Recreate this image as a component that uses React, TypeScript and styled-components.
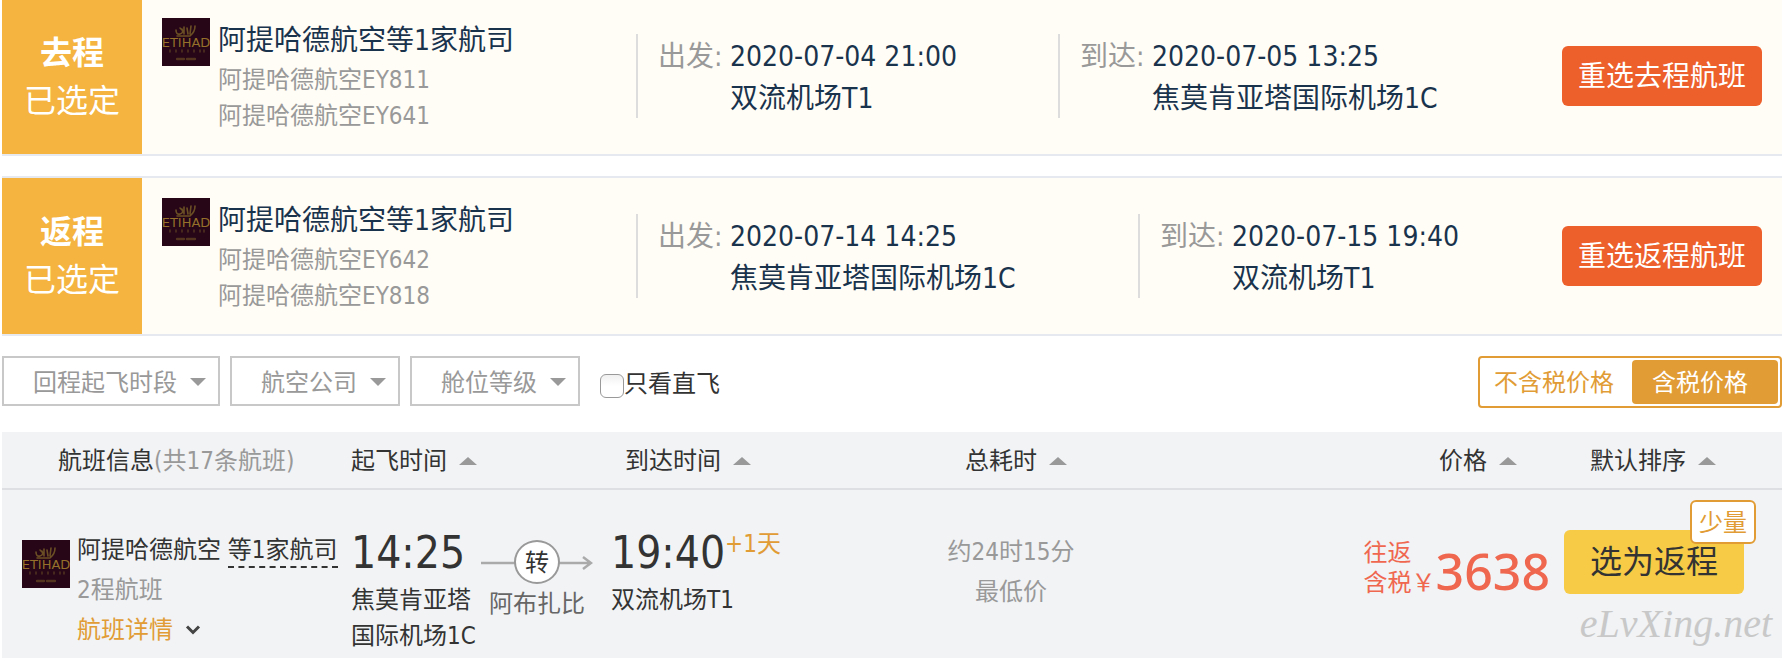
import React from 'react';
import styled, { createGlobalStyle } from 'styled-components';

const GlobalStyle = createGlobalStyle`
  *, *::before, *::after { box-sizing: border-box; }
  body {
    margin: 0;
    background: #fff;
    color: #333;
    font-family: Tahoma, 'DejaVu Sans Condensed', 'Noto Sans CJK SC', sans-serif;
    font-size: 24px;
    line-height: 36px;
  }
  button, select, input { font: inherit; margin: 0; }
  button { cursor: pointer; }
`;

const Page = styled.main`
  position: relative;
  padding: 0 2px;
`;

/* ---------- selected legs ---------- */

const Leg = styled.section<{ $first?: boolean }>`
  display: flex;
  align-items: stretch;
  height: ${(p) => (p.$first ? 156 : 160)}px;
  margin-bottom: 20px;
  border: solid #e6e9f0;
  border-width: ${(p) => (p.$first ? '0 0 2px' : '2px 0')};
  background: #fffdf6;
  color: #1a334d;
  font-size: 28px;
`;

const LegTag = styled.div`
  flex: none;
  display: flex;
  flex-direction: column;
  justify-content: center;
  width: 140px;
  background: #f4b43f;
  color: #fff;
  font-size: 32px;
  line-height: 48px;
  text-align: center;
`;

const Carrier = styled.div<{ $first?: boolean }>`
  flex: none;
  display: flex;
  gap: 8px;
  width: 494px;
  padding: ${(p) => (p.$first ? 18 : 20)}px 0 0 20px;
`;

const CarrierName = styled.h2`
  margin: 0;
  padding-top: 2px;
  font-size: 28px;
  font-weight: 400;
  line-height: 42px;
`;

const CarrierFlight = styled.p`
  margin: 0;
  color: #999;
  font-size: 24px;
  line-height: 36px;
`;

const Stop = styled.dl<{ $first?: boolean; $width?: number }>`
  display: grid;
  grid-template-columns: 72px auto;
  grid-template-rows: 42px 42px;
  justify-content: start;
  flex: ${(p) => (p.$width ? `0 1 ${p.$width}px` : '1 1 auto')};
  height: 84px;
  margin: ${(p) => (p.$first ? 34 : 36)}px 0 0;
  padding: 2px 0 0 20px;
  border-left: 2px solid #ddd;
  line-height: 42px;
  white-space: nowrap;
`;

const StopLabel = styled.dt`
  color: #999;
`;

const StopText = styled.dd`
  grid-column: 2;
  margin: 0;
`;

const ReselectButton = styled.button<{ $first?: boolean }>`
  flex: none;
  width: 200px;
  height: 60px;
  margin: ${(p) => (p.$first ? 46 : 48)}px 20px 0 0;
  padding: 2px 0 0;
  border: 0;
  border-radius: 6px;
  background: #ed5f2b;
  color: #fff;
`;

/* ---------- filters ---------- */

const FilterBar = styled.form`
  display: flex;
  align-items: flex-start;
  gap: 10px;
  height: 76px;
`;

const SelectBox = styled.div<{ $width: number }>`
  position: relative;
  width: ${(p) => p.$width}px;

  &::after {
    content: '';
    position: absolute;
    top: 22px;
    right: 14px;
    border: solid transparent;
    border-width: 8px 8px 0;
    border-top-color: #999;
    pointer-events: none;
  }
`;

const Select = styled.select`
  display: block;
  width: 100%;
  height: 50px;
  padding: 4px 0 0 29px;
  appearance: none;
  border: 2px solid #c8c8c8;
  border-radius: 0;
  background: #fff;
  color: #999;
`;

const DirectOnly = styled.label`
  display: flex;
  align-items: center;
  height: 56px;
  margin-left: 10px;
`;

const Checkbox = styled.input`
  width: 24px;
  height: 24px;
  margin-top: 4px;
  appearance: none;
  border: 1px solid #999;
  border-radius: 6px;
  background: linear-gradient(#f0f0f0, #fff 50%);
  &:checked { background: #e19c35; }
`;

const TaxToggle = styled.div`
  display: flex;
  height: 52px;
  margin-left: auto;
  padding: 2px;
  border: 2px solid #e19c35;
  border-radius: 4px;
`;

const TaxOption = styled.button<{ $active?: boolean }>`
  height: 44px;
  padding: ${(p) => (p.$active ? '2px 30px 0 20px' : '2px 18px 0 12px')};
  border: 0;
  border-radius: 4px;
  background: ${(p) => (p.$active ? '#e19c35' : 'transparent')};
  color: ${(p) => (p.$active ? '#fff' : '#e19c35')};
`;

/* ---------- result table ---------- */

const Results = styled.table`
  width: 100%;
  table-layout: fixed;
  border-collapse: separate;
  border-spacing: 0;
  background: #f1f3f5;
`;

const Col = styled.col<{ $width?: number }>`
  width: ${(p) => (p.$width ? `${p.$width}px` : 'auto')};
`;

const Head = styled.th<{ $indent?: number; $end?: number; $align?: string }>`
  height: 58px;
  padding: 2px ${(p) => p.$end ?? 0}px 0 ${(p) => p.$indent ?? 0}px;
  border-bottom: 2px solid #dddfe2;
  font-weight: 400;
  text-align: ${(p) => p.$align ?? 'left'};
  white-space: nowrap;
`;

const SortButton = styled.button`
  display: inline-flex;
  align-items: center;
  gap: 12px;
  padding: 0;
  border: 0;
  background: none;
  color: inherit;

  &::after {
    content: '';
    border: solid transparent;
    border-width: 0 9px 8px;
    border-bottom-color: #999;
  }
`;

const Muted = styled.span`
  color: #999;
`;

const Cell = styled.td<{ $top: number; $end?: number; $align?: string }>`
  height: 168px;
  padding: ${(p) => p.$top}px ${(p) => p.$end ?? 0}px 0 0;
  text-align: ${(p) => p.$align ?? 'left'};
  vertical-align: top;
  white-space: nowrap;
`;

const FlightInfo = styled.div`
  display: flex;
  gap: 7px;
  padding-left: 20px;
  line-height: 40px;
`;

const LogoSlot = styled.div`
  padding-top: 10px;
  line-height: 0;
`;

const CodeShare = styled.span`
  display: inline-block;
  height: 38px;
  border-bottom: 2px dashed #333;
`;

const DetailLink = styled.a`
  display: flex;
  align-items: center;
  gap: 12px;
  color: #e19c35;
  text-decoration: none;
`;

const Time = styled.div`
  display: flex;
  align-items: flex-start;
  height: 56px;
  font-size: 44px;
  line-height: 54px;
`;

const DayShift = styled.sup`
  color: #e19c35;
  font-size: 24px;
  line-height: 36px;
`;

const Transfer = styled.div`
  width: 112px;
  margin-left: 2px;
  color: #666;
  line-height: 36px;
  text-align: center;
`;

const TransferLine = styled.div`
  position: relative;
  display: flex;
  justify-content: center;
  height: 46px;

  svg {
    position: absolute;
    top: 16px;
    left: 0;
  }
`;

const TransferMark = styled.span`
  position: relative;
  width: 46px;
  height: 44px;
  border: 2px solid #999;
  border-radius: 50%;
  background: #fff;
  color: #333;
  line-height: 42px;
`;

const Duration = styled.div`
  color: #999;
  line-height: 40px;
`;

const Price = styled.div`
  display: flex;
  align-items: flex-end;
  justify-content: flex-end;
  color: #f0674f;
  line-height: 30px;
  text-align: left;
`;

const Amount = styled.strong`
  font-family: 'Noto Sans', 'Open Sans', sans-serif;
  font-size: 50px;
  font-weight: 500;
  line-height: 54px;
`;

const Action = styled.div`
  position: relative;
  width: 192px;
  margin-left: 12px;
`;

const SelectButton = styled.button`
  width: 180px;
  height: 64px;
  padding: 0;
  border: 0;
  border-radius: 6px;
  background: #f7cb45;
  color: #333;
  font-size: 32px;
`;

const Badge = styled.span`
  position: absolute;
  top: -30px;
  right: 0;
  width: 66px;
  height: 44px;
  border: 2px solid #e19c35;
  border-radius: 6px;
  background: #fff;
  color: #e19c35;
  line-height: 42px;
  text-align: center;
`;

const Watermark = styled.span`
  position: absolute;
  right: 12px;
  bottom: 12px;
  color: #c8c8c8;
  font: italic 40px/44px 'Liberation Serif', serif;
`;

const AirlineLogo = () => (
  <svg width="48" height="48" viewBox="0 0 48 48" role="img" aria-label="Etihad">
    <rect width="48" height="48" fill="#260617" />
    <g stroke="#7d6128" fill="none" strokeLinecap="round">
      <path d="M14 12q0 5 4 4t2-5M22 9v7M25 10l1 6M29 8l-1 8M33 8q0 6-5 10M15 18h12M18 10l2 2" strokeWidth="1.6" opacity=".8" />
      <path d="M8 34v-2M14 34v-2M20 34v-2M26 34v-2M32 34v-2M38 34v-2M42 34v-2" strokeWidth="1.4" opacity=".55" />
      <path d="M15 41h7M25 41h8" strokeWidth="2.4" strokeDasharray="2 1" opacity=".5" />
    </g>
    <text x="24" y="29" textAnchor="middle" fontSize="13" fontFamily="DejaVu Sans" fill="#94702a">
      ETIHAD
    </text>
  </svg>
);

type LegData = {
  tag: string;
  flights: string[];
  depart: [string, string];
  arrive: [string, string];
  departWidth: number;
};

const legs: LegData[] = [
  {
    tag: '去程',
    flights: ['EY811', 'EY641'],
    depart: ['2020-07-04 21:00', '双流机场T1'],
    arrive: ['2020-07-05 13:25', '焦莫肯亚塔国际机场1C'],
    departWidth: 422,
  },
  {
    tag: '返程',
    flights: ['EY642', 'EY818'],
    depart: ['2020-07-14 14:25', '焦莫肯亚塔国际机场1C'],
    arrive: ['2020-07-15 19:40', '双流机场T1'],
    departWidth: 502,
  },
];

const filters = [
  { label: '回程起飞时段', width: 218 },
  { label: '航空公司', width: 170 },
  { label: '舱位等级', width: 170 },
];

export default function App() {
  return (
    <Page>
      <GlobalStyle />
      {legs.map((leg, i) => {
        const first = i === 0;
        return (
          <Leg key={leg.tag} $first={first}>
            <LegTag>
              <strong>{leg.tag}</strong>
              <span>已选定</span>
            </LegTag>
            <Carrier $first={first}>
              <AirlineLogo />
              <div>
                <CarrierName>阿提哈德航空等1家航司</CarrierName>
                {leg.flights.map((f) => (
                  <CarrierFlight key={f}>阿提哈德航空{f}</CarrierFlight>
                ))}
              </div>
            </Carrier>
            <Stop $first={first} $width={leg.departWidth}>
              <StopLabel>出发:</StopLabel>
              <StopText>{leg.depart[0]}</StopText>
              <StopText>{leg.depart[1]}</StopText>
            </Stop>
            <Stop $first={first}>
              <StopLabel>到达:</StopLabel>
              <StopText>{leg.arrive[0]}</StopText>
              <StopText>{leg.arrive[1]}</StopText>
            </Stop>
            <ReselectButton type="button" $first={first}>
              重选{leg.tag}航班
            </ReselectButton>
          </Leg>
        );
      })}

      <FilterBar>
        {filters.map((f) => (
          <SelectBox key={f.label} $width={f.width}>
            <Select aria-label={f.label}>
              <option>{f.label}</option>
            </Select>
          </SelectBox>
        ))}
        <DirectOnly>
          <Checkbox type="checkbox" />
          只看直飞
        </DirectOnly>
        <TaxToggle role="group">
          <TaxOption type="button">不含税价格</TaxOption>
          <TaxOption type="button" $active aria-pressed>
            含税价格
          </TaxOption>
        </TaxToggle>
      </FilterBar>

      <Results>
        <colgroup>
          <Col $width={349} />
          <Col $width={128} />
          <Col $width={132} />
          <Col $width={292} />
          <Col $width={216} />
          <Col />
          <Col $width={230} />
        </colgroup>
        <thead>
          <tr>
            <Head $indent={56}>
              航班信息<Muted>(共17条航班)</Muted>
            </Head>
            <Head colSpan={2}>
              <SortButton type="button">起飞时间</SortButton>
            </Head>
            <Head $indent={14}>
              <SortButton type="button">到达时间</SortButton>
            </Head>
            <Head $indent={10} $align="center">
              <SortButton type="button">总耗时</SortButton>
            </Head>
            <Head $end={35} $align="right">
              <SortButton type="button">价格</SortButton>
            </Head>
            <Head $indent={38}>
              <SortButton type="button">默认排序</SortButton>
            </Head>
          </tr>
        </thead>
        <tbody>
          <tr>
            <Cell $top={40}>
              <FlightInfo>
                <LogoSlot>
                  <AirlineLogo />
                </LogoSlot>
                <div>
                  <div>
                    阿提哈德航空 <CodeShare>等1家航司</CodeShare>
                  </div>
                  <Muted>2程航班</Muted>
                  <DetailLink href="#detail">
                    航班详情
                    <svg width="16" height="10" viewBox="0 0 16 10" aria-hidden="true">
                      <path d="M2 1.5l6 6 6-6" fill="none" stroke="#444" strokeWidth="3" />
                    </svg>
                  </DetailLink>
                </div>
              </FlightInfo>
            </Cell>
            <Cell $top={36}>
              <Time>14:25</Time>
              <div>焦莫肯亚塔</div>
              <div>国际机场1C</div>
            </Cell>
            <Cell $top={50}>
              <Transfer>
                <TransferLine>
                  <svg width="112" height="14" viewBox="0 0 112 14" aria-hidden="true">
                    <path d="M0 7h110M102 1l8 6-8 6" fill="none" stroke="#aaa" strokeWidth="2.5" />
                  </svg>
                  <TransferMark>转</TransferMark>
                </TransferLine>
                阿布扎比
              </Transfer>
            </Cell>
            <Cell $top={36}>
              <Time>
                19:40<DayShift>+1天</DayShift>
              </Time>
              <div>双流机场T1</div>
            </Cell>
            <Cell $top={42} $align="center">
              <Duration>
                约24时15分
                <br />
                最低价
              </Duration>
            </Cell>
            <Cell $top={48} $end={2}>
              <Price>
                <span>
                  往返
                  <br />
                  含税￥
                </span>
                <Amount>3638</Amount>
              </Price>
            </Cell>
            <Cell $top={40}>
              <Action>
                <SelectButton type="button">选为返程</SelectButton>
                <Badge>少量</Badge>
              </Action>
            </Cell>
          </tr>
        </tbody>
      </Results>
      <Watermark>eLvXing.net</Watermark>
    </Page>
  );
}
